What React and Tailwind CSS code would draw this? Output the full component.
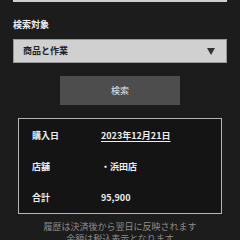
import React from "react";

export default function App() {
  const rows = [
    { label: "購入日", value: "2023年12月21日", link: true },
    { label: "店舗", value: "・浜田店" },
    { label: "合計", value: "95,900" },
  ];

  return (
    <div
      className="w-[240px] h-[240px] overflow-hidden bg-[#1c1c1c] px-[13px]"
      style={{ fontFamily: '"Noto Sans CJK JP", "Noto Sans", sans-serif' }}
    >
      {/* bottom edge of the field above */}
      <div className="h-[2px] bg-[#cfcfcf]" />

      <div className="mt-[17px] text-[9px] leading-[12px] font-bold text-[#f0f0f0]">検索対象</div>

      <div className="mt-[8px] h-[24px] bg-[#d0d0d0] border border-[#999] flex items-center justify-between pl-[9px] pr-[11px]">
        <span className="text-[9px] font-bold text-[#222]">商品と作業</span>
        <svg width="8" height="7" viewBox="0 0 8 7">
          <polygon points="0,0 8,0 4,7" fill="#333" />
        </svg>
      </div>

      <div className="mt-[13px] mx-auto w-[120px] h-[29px] bg-[#4d4d4d] flex items-center justify-center text-[9px] text-[#e8e8e8]">
        検索
      </div>

      <div className="mt-[13px] mx-[5px] h-[96px] border border-[#b5b5b5] bg-[#141414] pt-[11px] pl-[13px] flex flex-col gap-[19px]">
        {rows.map((r) => (
          <div key={r.label} className="flex text-[9px] leading-[12px] font-bold text-[#eeeeee]">
            <span className="w-[69px]">{r.label}</span>
            <span className={r.link ? "underline underline-offset-2" : ""}>{r.value}</span>
          </div>
        ))}
      </div>

      <div className="mt-[7px] text-center text-[9px] leading-[12px] text-[#8c8c8c]">
        <p>履歴は決済後から翌日に反映されます</p>
        <p>金額は税込表示となります</p>
      </div>
    </div>
  );
}
